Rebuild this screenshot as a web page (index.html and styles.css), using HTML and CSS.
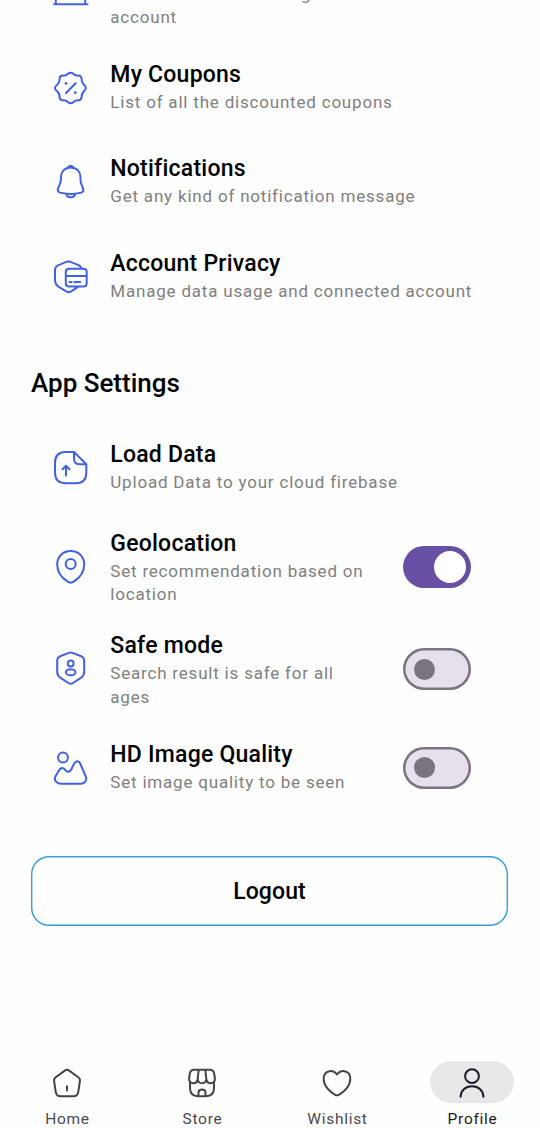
FILE: index.html
```html
<!DOCTYPE html>
<html lang="en">
<head>
<meta charset="utf-8">
<title>Profile settings</title>
<link rel="stylesheet" href="styles.css">
</head>
<body>
<main class="content">
  <section class="group clipped">
    <div class="tile tile-bank">
      <svg class="icon" viewBox="10 10.500 40 40"><path d="M14.500 23.500L30.500 14L46.500 23.500M15.800 24V43M45.200 24V43M14.200 43.700H47.500M24 28V34M36 28V34"/></svg>
      <div class="text"><h3>Bank Account</h3><p>Withdraw balance to registered bank<br>account</p></div>
    </div>
  </section>
  <section class="group">
    <div class="tile">
      <svg class="icon" viewBox="10 7 40 40"><path d="M27.800 12.900Q30.600 10.700 33.400 12.900C35 14.300 36 14.800 38 14.600Q41.500 14.500 41.600 18C41.400 20.500 41.900 21.600 43.900 23.700Q47.800 27 43.900 30.300C41.900 32.400 41.400 33.500 41.600 36Q41.500 39.400 38 39.400C36 39.200 35 39.700 33.400 41.100Q30.600 43.300 27.800 41.100C26.200 39.700 25.200 39.200 23.200 39.400Q19.700 39.400 19.600 36C19.800 33.500 19.300 32.400 17.300 30.300Q12.500 27 17.300 23.700C19.300 21.600 19.800 20.500 19.600 18Q19.700 14.500 23.200 14.600C25.200 14.800 26.200 14.300 27.800 12.900ZM35.700 22.200L26 32"/><circle class="dot" cx="26" cy="22.400" r="1.400"/><circle class="dot" cx="35.300" cy="31.700" r="1.400"/></svg>
      <div class="text"><h3>My Coupons</h3><p>List of all the discounted coupons</p></div>
    </div>
    <div class="tile">
      <svg class="icon" viewBox="10 11.500 40 40"><path d="M30.700 17C24.500 17 20.900 21.500 20.900 26.800V29.500C20.900 33 18.200 36 17.800 38.800C17.600 40.500 18.500 41.600 20.200 42.100Q30.700 44.900 41.200 42.100C42.900 41.600 43.700 40.300 43.200 38.500C42.500 35.800 40.500 33 40.500 29.500V26.800C40.500 21.500 36.900 17 30.700 17ZM28 16.800Q30.700 14.500 33.400 16.800M26 43.300C27.200 48 34.200 48 35.400 43.300"/></svg>
      <div class="text"><h3>Notifications</h3><p>Get any kind of notification message</p></div>
    </div>
    <div class="tile">
      <svg class="icon" viewBox="10 11 40 40"><path d="M41.500 22.200C41 20.800 40 20 38.500 19.200L30.500 15.800Q28.700 15.100 26.900 15.700L18 19.400Q15 20.700 15 24V34C15 37 15.700 38.800 18 40.400L26.700 45.700Q28.700 46.900 30.800 45.700L38 40.900M29 22.700H43.600Q46.700 22.700 46.700 25.800V37.500Q46.700 40.600 43.600 40.600H29Q25.800 40.600 25.800 37.500V25.800Q25.800 22.700 29 22.700ZM26 30H46.500M29.500 36H31.800M34.700 36H40.200"/></svg>
      <div class="text"><h3>Account Privacy</h3><p>Manage data usage and connected account</p></div>
    </div>
  </section>
  <h2 class="heading">App Settings</h2>
  <section class="group">
    <div class="tile">
      <svg class="icon" viewBox="10 11 40 40"><path d="M34 15H26Q15 15 15 25.500V35.500Q15 46.300 26 46.300H35.500Q46.300 46.300 46.300 35.500V27.200M34 15V21.500Q34 27.200 39.500 27.200H46.300L34 15M26 38.500V29M22.500 32.300L26 28.800L29.500 32.300"/></svg>
      <div class="text"><h3>Load Data</h3><p>Upload Data to your cloud firebase</p></div>
    </div>
    <div class="tile two-line">
      <svg class="icon" viewBox="10 10.500 40 40"><path d="M30.700 14.600C22.500 14.600 17.200 20.500 17.200 28C17.200 35.500 22 41.500 27.700 45.200Q30.700 47.100 33.700 45.200C39.400 41.500 44.200 35.500 44.200 28C44.200 20.500 38.900 14.600 30.700 14.600Z"/><circle cx="30.700" cy="27.500" r="5"/></svg>
      <div class="text"><h3>Geolocation</h3><p>Set recommendation based on<br>location</p></div>
      <span class="switch on" role="switch" aria-checked="true"><span class="thumb"></span></span>
    </div>
    <div class="tile two-line">
      <svg class="icon" viewBox="10 11.500 40 40"><path d="M28.800 15.400Q30.700 14.700 32.500 15.400L41.200 18.700Q44.200 20 44.200 23.500V34C44.200 37.500 43.200 38.700 41.200 40.200L33 45.500Q30.700 47 28.400 45.500L20.200 40.200C18.200 38.700 17.200 37.500 17.200 34V23.500Q17.200 20 20.200 18.700Z"/><circle cx="30.700" cy="26" r="2.900"/><ellipse cx="30.700" cy="34.700" rx="4.800" ry="3"/></svg>
      <div class="text"><h3>Safe mode</h3><p>Search result is safe for all<br>ages</p></div>
      <span class="switch" role="switch" aria-checked="false"><span class="thumb"></span></span>
    </div>
    <div class="tile">
      <svg class="icon" viewBox="10 9 40 40"><circle cx="23" cy="18.500" r="4.900"/><path d="M20.800 44.700H41C45 44.700 47.300 41 45.800 37.500L40.200 24.500C38.900 21.500 35.800 21.500 34.300 24.500L31.200 30.500C29.700 33.400 27.300 33.500 25.500 31.200C23.700 28.300 20.800 28.300 19.200 31L15.500 37.300C13.600 41 16.500 44.700 20.800 44.700Z"/></svg>
      <div class="text"><h3>HD Image Quality</h3><p>Set image quality to be seen</p></div>
      <span class="switch" role="switch" aria-checked="false"><span class="thumb"></span></span>
    </div>
  </section>
  <button class="logout">Logout</button>
</main>
<nav class="nav">
  <a class="nav-item"><span class="pill"><svg class="nav-icon" viewBox="0 0 32 32"><path d="M13.800 3.600Q16 2 18.200 3.600L27.300 10.200Q29.300 11.700 28.900 14L27.300 24.800Q26.600 29.200 22.500 29.200H9.500Q5.400 29.200 4.700 24.800L3.100 14Q2.700 11.700 4.700 10.200ZM16 19.200V23.500"/></svg></span><span>Home</span></a>
  <a class="nav-item"><span class="pill"><svg class="nav-icon" viewBox="0 0 32 32"><path d="M4 14.500V21Q4 29.200 12 29.200H20Q28 29.200 28 21V14.500M8 2.700H24Q27.500 2.700 28.200 6.500L28.900 11.500C29.200 14.200 27.300 16.300 24.800 16.300C22.300 16.300 20.600 14.300 20.300 12C20 14.500 18.300 16.300 16 16.300C13.700 16.300 12 14.500 11.700 12C11.400 14.300 9.700 16.300 7.200 16.300C4.700 16.300 2.800 14.200 3.100 11.500L3.800 6.500Q4.500 2.700 8 2.700ZM12.700 2.700L11.700 12M19.300 2.700L20.300 12M12.500 29V25.500Q12.500 22.500 16 22.500Q19.500 22.500 19.500 25.500V29"/></svg></span><span>Store</span></a>
  <a class="nav-item"><span class="pill"><svg class="nav-icon" viewBox="0 0 32 32"><path d="M16 7.500C13.800 4.500 11.200 3.700 8.500 4.200C4.500 5 2.500 8.500 2.700 12.500C3 19.500 9.500 25.200 14.200 27.800Q16 28.800 17.800 27.800C22.500 25.200 29 19.500 29.300 12.500C29.500 8.500 27.500 5 23.500 4.200C20.800 3.700 18.200 4.500 16 7.500Z"/></svg></span><span>Wishlist</span></a>
  <a class="nav-item active"><span class="pill"><svg class="nav-icon" viewBox="0 0 32 32"><circle cx="16" cy="9.200" r="6.900"/><path d="M4.600 29.700C4.600 23.500 9.500 19.300 16 19.300S27.400 23.500 27.400 29.700"/></svg></span><span>Profile</span></a>
</nav>
</body>
</html>
```

FILE: styles.css
```css
* { box-sizing: border-box; }
body {
  margin: 0;
  width: 540px;
  height: 1128px;
  overflow: hidden;
  display: flex;
  flex-direction: column;
  background: #fefefe;
  color: #000;
  font-family: Roboto, sans-serif;
}
.content { flex: 1; padding: 0 31px; }
.clipped {
  height: 40.300px;
  overflow: hidden;
  display: flex;
  flex-direction: column;
  justify-content: flex-end;
}
.tile {
  display: flex;
  align-items: center;
  height: 94.5px;
  padding: 0 38px 0 19px;
}
.tile.two-line { height: 102.5px; }
.tile.tile-bank { flex: none; height: 98px; }
.icon, .nav-icon {
  flex: none;
  fill: none;
  stroke: #4162e0;
  stroke-width: 2;
  stroke-linecap: round;
  stroke-linejoin: round;
}
.icon { width: 40px; height: 40px; }
.icon .dot { fill: #4162e0; stroke: none; }
.text { flex: 1; margin-left: 20.300px; white-space: nowrap; }
.two-line .text { padding-top: 3.200px; }
h3 {
  margin: 0 0 2px;
  font-size: 23px;
  font-weight: 500;
  line-height: 28px;
  letter-spacing: 0.23px;
}
p {
  margin: 0;
  font-size: 17px;
  line-height: 23.5px;
  letter-spacing: 0.8px;
  color: #7f7f7f;
}
.heading {
  margin: 43px 0 21px;
  font-size: 26px;
  font-weight: 500;
  line-height: 33px;
}
.switch {
  flex: none;
  display: flex;
  align-items: center;
  width: 68px;
  height: 42px;
  padding-left: 10.500px;
  border-radius: 21px;
  background: #e6e0ec;
  box-shadow: inset 0 0 0 2.500px #79747e;
}
.thumb { width: 21px; height: 21px; border-radius: 50%; background: #79747e; }
.switch.on { justify-content: flex-end; padding: 0 5px; background: #6750a4; box-shadow: none; }
.switch.on .thumb { width: 32px; height: 32px; background: #fff; }
.logout {
  display: block;
  width: 477px;
  height: 70px;
  margin-top: 41.500px;
  border: 0;
  box-shadow: inset 0 0 0 1.400px #379bd8;
  border-radius: 18px;
  background: transparent;
  color: #000;
  font: 500 23px Roboto, sans-serif;
  letter-spacing: 0.1px;
}
.nav { display: flex; height: 67px; }
.nav-item {
  flex: 1;
  display: flex;
  flex-direction: column;
  align-items: center;
  gap: 5.500px;
  font-size: 15.500px;
  line-height: 21px;
  letter-spacing: 0.7px;
  color: #49494b;
}
.pill {
  display: flex;
  flex: none;
  align-items: center;
  justify-content: center;
  width: 84px;
  height: 42px;
  margin-right: 1px;
  padding-top: 1px;
  border-radius: 21px;
}
.nav-icon { width: 32px; height: 32px; stroke: #444446; }
.active { color: #1d1b20; }
.active .pill { background: #e8e8e8; }
.active .nav-icon { stroke: #1d1b28; }
```
